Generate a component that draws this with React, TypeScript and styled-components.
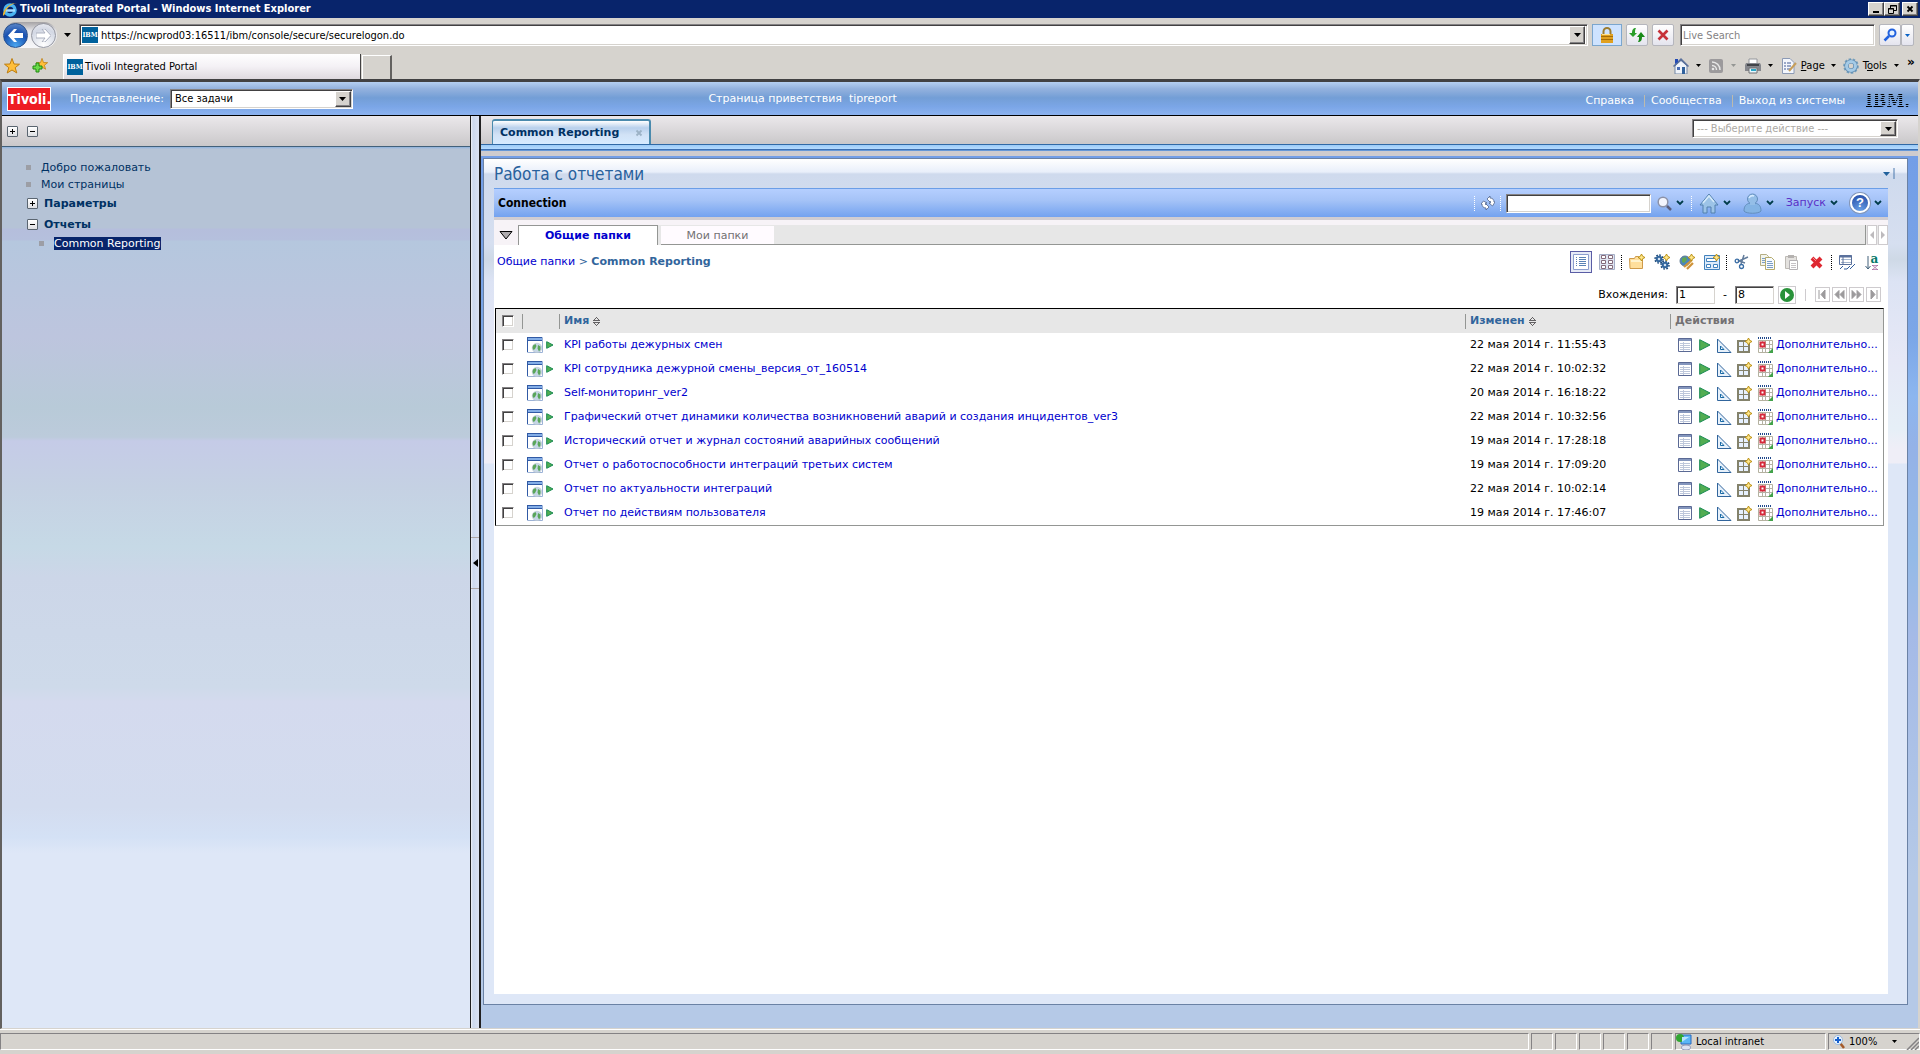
import React from "react";
import styled, { createGlobalStyle, css } from "styled-components";

const verdana = `Verdana, "DejaVu Sans", sans-serif`;
const tahoma = `Tahoma, "DejaVu Sans Condensed", "DejaVu Sans", sans-serif`;
const face = "#d6d3ce";

const GlobalStyle = createGlobalStyle`
  *, *::before, *::after { box-sizing: border-box; }
  body { margin: 0; background: ${face}; font: 11px/14px ${verdana}; color: #000; }
  button, input, select { font: inherit; margin: 0; padding: 0; color: inherit; border-radius: 0; }
  button { border: 0; background: none; cursor: pointer; display: flex; align-items: center; justify-content: center; }
  a { text-decoration: none; color: inherit; }
  svg { display: block; flex: none; }
  ul { list-style: none; margin: 0; padding: 0; }
  h1, h2 { margin: 0; }
`;

const sunken = css`
  border: 1px solid;
  border-color: #848284 #fff #fff #848284;
  box-shadow: inset 1px 1px 0 #424142, inset -1px -1px 0 ${face};
`;
const raised = css`
  background: ${face};
  border: 1px solid;
  border-color: #fff #424142 #424142 #fff;
  box-shadow: inset -1px -1px 0 #848284;
`;

const Window = styled.div`
  display: flex;
  flex-direction: column;
  min-height: 100vh;
`;

/* ---------- Browser chrome ---------- */

const TitleBar = styled.header`
  display: flex;
  align-items: center;
  height: 18px;
  padding: 0 2px;
  gap: 2px;
  background: #08246b;
  color: #fff;
  font: bold 11px/18px ${tahoma};
`;
const TitleText = styled.span`
  flex: 1;
`;
const CaptionButtons = styled.div`
  display: flex;
  & > :last-child { margin-left: 2px; }
`;
const CaptionButton = styled.button`
  ${raised}
  width: 16px;
  height: 14px;
`;

const AddressRow = styled.div`
  display: flex;
  align-items: center;
  height: 34px;
  padding: 0 6px 0 3px;
  gap: 4px;
  font-family: ${tahoma};
`;
const NavPill = styled.div`
  display: flex;
  align-items: center;
  gap: 3px;
  height: 26px;
  padding-right: 1px;
  border-radius: 13px;
  background: linear-gradient(#a5a3a5, #e7e7ea 35%, #f7f7f9);
`;
const NavButton = styled.button<{ $active?: boolean }>`
  width: 25px;
  height: 25px;
  && { border-radius: 50%; }
  border: 1px solid ${(p) => (p.$active ? "#28508c" : "#9496a0")};
  background: ${(p) =>
    p.$active
      ? "radial-gradient(circle at 50% 95%, #4aa6f0, #1850b0 55%, #5a86c8 90%)"
      : "radial-gradient(circle at 50% 90%, #fff, #d3d8e4 65%, #f0f0f4)"};
`;
const MenuArrow = styled.button<{ $w?: number }>`
  width: ${(p) => p.$w ?? 20}px;
  height: 20px;
`;
const AddressField = styled.div`
  ${sunken}
  display: flex;
  align-items: center;
  flex: 1;
  height: 22px;
  margin-left: 1px;
  padding: 2px;
  gap: 3px;
  background: #fff;
`;
const BareInput = styled.input`
  flex: 1;
  min-width: 0;
  padding-top: 1px;
  border: 0;
  outline: 0;
  background: none;
  &::placeholder { color: #848284; opacity: 1; }
`;
const DropButton = styled.button`
  ${raised}
  width: 16px;
  height: 18px;
`;
const IbmBadge = styled.span`
  width: 16px;
  height: 16px;
  background: #00619c;
  color: #fff;
  font: bold 7px/16px "DejaVu Serif Condensed", "DejaVu Serif", serif;
  text-align: center;
`;
const LockButton = styled.button`
  width: 30px;
  height: 22px;
  border: 1px solid #7ba6ce;
  background: #cee3ff;
`;
const ToolButton = styled.button<{ $w?: number }>`
  width: ${(p) => p.$w ?? 22}px;
  height: 22px;
  && { border-radius: 2px; }
  border: 1px solid #b5b6bd;
  background: linear-gradient(#fff, #e4e4ee);
`;
const SearchField = styled.div`
  ${sunken}
  display: flex;
  width: 195px;
  height: 22px;
  padding: 2px;
  margin: 0 0 0 2px;
  background: #fff;
`;
const SearchButtons = styled.div`
  display: flex;
`;

const TabRow = styled.div`
  display: flex;
  align-items: flex-end;
  height: 27px;
  padding-left: 2px;
  font-family: ${tahoma};
`;
const Favorites = styled.div`
  display: flex;
  align-self: center;
  gap: 8px;
  width: 61px;
`;
const FavoriteButton = styled.button`
  width: 20px;
  height: 20px;
`;
const BrowserTab = styled.button`
  && { justify-content: flex-start; }
  gap: 2px;
  width: 298px;
  height: 25px;
  padding: 0 3px;
  border-right: 1px solid #424142;
  border-left: 1px solid #fff;
  background: linear-gradient(#fff, #f4f1f5 50%, #ded9de);
`;
const NewTab = styled.button`
  width: 30px;
  height: 24px;
  margin-left: 1px;
  border: 1px solid #fff;
  border-right: 2px solid #63615f;
  border-bottom: 0;
`;
const CommandBar = styled.nav`
  display: flex;
  align-items: center;
  align-self: center;
  margin-left: auto;
  padding-right: 3px;
`;
const Command = styled.button`
  gap: 4px;
  height: 20px;
`;
const Chevron = styled.button`
  align-self: flex-start;
  width: 12px;
  font: bold 12px/12px ${verdana};
`;

/* ---------- Portal ---------- */

const Viewport = styled.div`
  display: flex;
  flex-direction: column;
  flex: 1;
  border: solid;
  border-width: 3px 2px 1px;
  border-color: #424142 ${face} ${face} #63615f;
`;
const PortalHeader = styled.header`
  display: flex;
  align-items: center;
  height: 34px;
  padding: 0 8px 0 5px;
  border-bottom: 1px solid #000;
  background: linear-gradient(#b5cff0, #94b2de 20%, #739ed6 48%, #7ba6e7 75%, #8cb2ef);
  color: #fff;
`;
const HeaderSide = styled.div<{ $grow: number }>`
  display: flex;
  align-items: center;
  flex: ${(p) => p.$grow} 1 0;
`;
const HeaderEnd = styled(HeaderSide)`
  justify-content: flex-end;
  padding-top: 4px;
`;
const TivoliLogo = styled.span`
  width: 44px;
  height: 24px;
  border: 1px solid #fff;
  background: #ee1c23;
  font: bold 14px/22px "Liberation Sans Narrow", "DejaVu Sans Condensed", sans-serif;
  text-align: center;
`;
const ViewLabel = styled.label`
  margin: 0 6px 0 19px;
`;
const Greeting = styled.span`
  white-space: pre;
`;
const HeaderLink = styled.a`
  padding: 0 10px 0 6px;
  border-right: 1px solid #bdbaad;
  line-height: 12px;
  &:last-of-type { border: 0; }
`;
const IbmLogo = styled.span`
  margin-left: 10px;
  color: #000;
  font: bold 18px/18px "DejaVu Serif Condensed", "DejaVu Serif", serif;
  mask-image: repeating-linear-gradient(#000 0 1px, transparent 1px 2px);
`;

const SelectBox = styled.span<{ $w: number; $h: number }>`
  ${sunken}
  position: relative;
  display: flex;
  width: ${(p) => p.$w}px;
  height: ${(p) => p.$h}px;
  padding: 2px;
  background: #fff;
`;
const BareSelect = styled.select<{ $muted?: boolean }>`
  appearance: none;
  flex: 1;
  padding: 0 18px 0 2px;
  border: 0;
  outline: 0;
  background: none;
  color: ${(p) => (p.$muted ? "#adaaa5" : "#000")};
  font-family: ${tahoma};
`;
const SelectArrow = styled.span`
  ${raised}
  position: absolute;
  inset: 1px 1px 1px auto;
  width: 16px;
  display: grid;
  place-items: center;
  pointer-events: none;
`;

const Columns = styled.div`
  display: flex;
  flex: 1;
`;
const Sidebar = styled.aside`
  display: flex;
  flex-direction: column;
  width: 469px;
  border-right: 1px solid #212021;
`;
const SidebarTools = styled.div`
  display: flex;
  align-items: center;
  gap: 9px;
  height: 31px;
  padding: 0 5px;
  border-bottom: 1px solid #42617b;
  background: linear-gradient(#ebe8eb, #cac8ca);
`;
const TreeArea = styled.nav`
  flex: 1;
  padding: 12px 0 0 25px;
  background: linear-gradient(
    #8cb2de 0, #b5c3d6 2px, #b5c3d6 81px, #b5bedc 82px, #b5c0dd 93px, #b5c7de 94px, #bdc5de 190px,
    #b8cad8 260px, #bccbdb 290px, #c5cbe7 294px, #c5d1e3 340px, #c6d9e6 400px, #ccd6e8 430px,
    #cedaea 540px, #d4daee 555px, #d3dcef 660px, #d4e1f5 690px, #dee7f7 706px
  );
  color: #003163;
`;
const TreeItem = styled.li<{ $h: number; $indent?: boolean; $bold?: boolean }>`
  display: flex;
  align-items: center;
  gap: ${(p) => (p.$bold ? 6 : 10)}px;
  height: ${(p) => p.$h}px;
  padding-left: ${(p) => (p.$indent ? 13 : 0)}px;
  font-weight: ${(p) => (p.$bold ? "bold" : "normal")};
`;
const Bullet = styled.span`
  width: 5px;
  height: 5px;
  margin-left: -1px;
  background: #9c9ea5;
`;
const TreeLink = styled.a<{ $selected?: boolean }>`
  ${(p) => p.$selected && "background: #08246b; color: #fff; line-height: 13px;"}
`;
const BoxButton = styled.button`
  width: 11px;
  height: 11px;
  && { border-radius: 1px; }
  border: 1px solid #5a6570;
  background: linear-gradient(#fff, #dedfe3);
`;
const Splitter = styled.div`
  display: flex;
  align-items: center;
  width: 10px;
  border-right: 2px solid #212021;
  background: linear-gradient(90deg, #f0f2f8, #cdd9ee 25%, #dce3f3);
`;
const SplitterHandle = styled.button`
  width: 8px;
  height: 52px;
  margin-bottom: 18px;
  border: solid #ada6a5;
  border-width: 1px 0;
`;

const Main = styled.main`
  display: flex;
  flex-direction: column;
  flex: 1;
  min-width: 0;
`;
const TabStrip = styled.div`
  display: flex;
  justify-content: space-between;
  height: 29px;
  padding: 3px 20px 0 11px;
  border-bottom: 1px solid #3169a5;
  background: linear-gradient(#ebe8eb, #cac8ca);
`;
const PageTab = styled.div`
  display: flex;
  align-items: center;
  justify-content: space-between;
  width: 159px;
  padding: 0 6px 0 7px;
  border: 1px solid #4a8aad;
  border-width: 2px 2px 0 1px;
  border-radius: 3px 3px 0 0;
  background: linear-gradient(#fff, #b8d0ec 30%, #d2e2f6 60%, #d6ebff);
  color: #003163;
  font-weight: bold;
`;
const TabRail = styled.div`
  height: 11px;
  background: linear-gradient(#9ccbf7 0, #b5dbff 4px, #315d9c 4px, #4a82c6 5px, #84aee7 6px, #cecbce 6px);
`;
const Canvas = styled.div`
  display: flex;
  flex: 1;
  padding: 2px 10px 23px 2px;
  background: linear-gradient(
    #739ee7, #7ba6e7 180px, #8cb6ef 240px, #94b2e7 290px, #94bae7 400px, #a5bae7 480px,
    #adc3e7 620px, #b5c9e7 720px
  );
`;
const Portlet = styled.section`
  display: flex;
  flex-direction: column;
  flex: 1;
  min-width: 0;
  padding: 0 19px 10px 10px;
  border: 1px solid #6b82a5;
  background: linear-gradient(
    #fff, #e9effa 13px, #cfdaed 15px, #d6dff0 85px, #ced9e6 100px, #dce3f4 122px, #e6e8f6 200px,
    #e6eff7 270px, #efeef7 290px, #efeef7 304px, #dee7f7 305px
  );
`;
const PortletTitle = styled.div`
  display: flex;
  align-items: center;
  justify-content: space-between;
  height: 29px;
`;
const TitleHeading = styled.h1`
  color: #29619c;
  font: normal 17px/28px ${tahoma};
`;
const TitleMenu = styled.button`
  gap: 3px;
  margin-right: -7px;
`;
const ConnectionBar = styled.div`
  display: flex;
  align-items: center;
  justify-content: space-between;
  height: 32px;
  padding: 0 6px 0 4px;
  border-top: 1px solid #6b9ee7;
  border-bottom: 3px solid #d0cdd2;
  background: linear-gradient(#b5cfff, #a5c3f7 40%, #73a2ef);
`;
const ConnectionName = styled.h2`
  font: bold 12px/16px ${tahoma};
`;
const ConnectionTools = styled.div`
  display: flex;
  align-items: center;
`;
const MenuButton = styled.button<{ $gap?: number }>`
  gap: 4px;
  margin-right: ${(p) => p.$gap ?? 12}px;
  color: #5a30c6;
`;
const BarInput = styled.input`
  ${sunken}
  width: 145px;
  height: 19px;
  margin: 0 6px 0 0;
  padding: 0 3px;
  background: #fff;
`;
const DottedRule = styled.span<{ $dark?: boolean; $mx?: number }>`
  height: 15px;
  margin: 0 ${(p) => p.$mx ?? 5}px;
  border-left: 1px dotted ${(p) => (p.$dark ? "#000" : "#fff")};
`;
const Body = styled.div`
  flex: 1;
  border-top: 5px solid #f7f3f7;
  background: #fff;
`;
const FolderTabs = styled.div`
  display: flex;
  height: 20px;
  background: #e7e7e7;
`;
const Toggle = styled.button`
  width: 24px;
  background: #f7f3f7;
`;
const FolderTab = styled.button<{ $active?: boolean }>`
  width: ${(p) => (p.$active ? 140 : 116)}px;
  ${(p) =>
    p.$active
      ? "border: 1px solid #949694; border-bottom: 0; background: #fff; color: #0000ce; font-weight: bold;"
      : "border: 3px solid #e7e7e7; border-width: 1px 0 0 3px; background: #fffbff; color: #737173; box-shadow: inset 0 -1px 0 #949694;"}
`;
const TabFiller = styled.div`
  flex: 1;
  border: solid #949694;
  border-width: 0 1px 1px 0;
`;
const ScrollButton = styled.button`
  width: 10px;
  margin-left: 1px;
  border: 1px solid #cecbce;
  background: #fff;
`;
const BreadcrumbRow = styled.div`
  display: flex;
  align-items: center;
  justify-content: space-between;
  height: 34px;
  padding: 0 4px 0 3px;
`;
const Breadcrumb = styled.nav`
  color: #31659c;
  & a { color: #0000ce; }
`;
const Toolbar = styled.div`
  display: flex;
  align-items: center;
`;
const IconButton = styled.button<{ $pressed?: boolean }>`
  width: ${(p) => (p.$pressed ? 22 : 25)}px;
  height: 22px;
  ${(p) => p.$pressed && "border: 1px solid #5a5da5; background: #e7ebf7; margin-right: 2px;"}
`;
const PagerRow = styled.form`
  display: flex;
  align-items: center;
  justify-content: flex-end;
  height: 29px;
  padding: 2px 7px 0 0;
`;
const PagerInput = styled.input`
  width: 39px;
  height: 18px;
  margin: 0 8px;
  padding: 0 2px;
  border: 1px solid;
  border-color: #848284 ${face} ${face} #848284;
  box-shadow: inset 1px 1px 0 #424142;
`;
const GoButton = styled.button`
  width: 18px;
  height: 18px;
  margin: 0 9px 0 -4px;
  border: 1px solid #cecbce;
`;
const PagerRule = styled.span`
  width: 1px;
  height: 12px;
  margin-right: 7px;
  background: #cecbce;
`;
const PagerButton = styled.button`
  width: 15px;
  height: 15px;
  margin-left: 2px;
  border: 1px solid #cecbce;
`;

const TableWrap = styled.div`
  margin: 0 4px 0 1px;
  border: 1px solid;
  border-color: #000 #949694 #949694 #000;
`;
const Table = styled.table`
  width: 100%;
  table-layout: fixed;
  border-collapse: collapse;
`;
const HeadCell = styled.th<{ $w?: number; $plain?: boolean }>`
  ${(p) => (p.$w ? `width: ${p.$w}px;` : "")}
  height: 24px;
  padding: 0;
  background: #e7e7e7;
  color: ${(p) => (p.$plain ? "#737173" : "#31659c")};
  text-align: left;
`;
const HeadInner = styled.span<{ $rule?: boolean }>`
  display: flex;
  align-items: center;
  gap: 4px;
  height: 15px;
  padding-left: ${(p) => (p.$rule ? 4 : 6)}px;
  border-left: ${(p) => (p.$rule ? "1px solid #949694" : "0")};
`;
const Cell = styled.td<{ $pad?: number }>`
  height: 24px;
  padding: 0 0 0 ${(p) => p.$pad ?? 5}px;
  white-space: nowrap;
`;
const CheckBox = styled.input`
  ${sunken}
  appearance: none;
  display: block;
  width: 12px;
  height: 12px;
  background: #fff;
`;
const ReportLink = styled.a`
  color: #0000ce;
`;
const IconPair = styled.span`
  display: flex;
  align-items: center;
  gap: 3px;
`;
const Actions = styled.span`
  display: flex;
  align-items: center;
  gap: 3px;
`;
const ActionButton = styled.button`
  width: 17px;
  height: 18px;
`;

/* ---------- Status bar ---------- */

const StatusBar = styled.footer`
  display: flex;
  gap: 2px;
  height: 25px;
  padding: 3px 0 4px;
  border-top: 1px solid #fff;
  font-family: ${tahoma};
`;
const StatusPane = styled.div<{ $w?: number }>`
  display: flex;
  align-items: center;
  ${(p) => (p.$w ? `width: ${p.$w}px;` : "flex: 1;")}
  gap: 4px;
  border: 1px solid;
  border-color: #848284 #fff #fff #848284;
`;
const ZoomPane = styled(StatusPane)`
  padding-left: 4px;
`;
const ZoomValue = styled.span`
  flex: 1;
`;

/* ---------- Icons ---------- */

type IconProps = { w?: number; h?: number; children: React.ReactNode };
const Icon = ({ w = 16, h = w, children }: IconProps) => (
  <svg width={w} height={h} viewBox={`0 0 ${w} ${h}`} aria-hidden="true">
    {children}
  </svg>
);
const Down = ({ color = "#000", w = 5 }: { color?: string; w?: number }) => (
  <Icon w={w} h={Math.ceil(w / 2)}>
    <path d={`M0 0H${w}L${w / 2} ${Math.ceil(w / 2)}Z`} fill={color} />
  </Icon>
);
const Vee = () => (
  <Icon w={8} h={6}>
    <path d="M1 1l3 3 3-3" stroke="#003c4a" strokeWidth="1.800" fill="none" />
  </Icon>
);
const IeIcon = () => (
  <Icon>
    <circle cx="8" cy="9" r="5" fill="none" stroke="#4ab2f0" strokeWidth="3.500" />
    <path d="M4 9.500h9" stroke="#a5dbff" strokeWidth="2.500" />
    <path d="M1 15C0 9 8 1 15 2c-6 0-12 7-12 11z" fill="#f0b830" />
  </Icon>
);
const NavArrow = ({ flip }: { flip?: boolean }) => (
  <Icon w={15} h={13}>
    <path
      d="M0 6.500 6 0h3L6 4h9v5H6l3 4H6z"
      fill="#fff"
      stroke={flip ? "#a5aaba" : "none"}
      strokeWidth=".9"
      transform={flip ? "rotate(180 7.500 6.500)" : undefined}
    />
  </Icon>
);
const Lock = () => (
  <Icon>
    <path d="M4.500 8V4.500a3.500 3.500 0 0 1 7 0V8" fill="none" stroke="#9c7d31" strokeWidth="2" />
    <rect x="2" y="7" width="12" height="9" fill="#e0a020" />
    <path d="M2 9.500h12M2 12.500h12" stroke="#a56d08" />
    <path d="M3 7.500h8" stroke="#ffe08c" />
  </Icon>
);
const Refresh = () => (
  <Icon>
    <path d="M7 1C4 1 3 3 3 6H0l4 4 4-4H6c0-2 0-3 1-5z" fill="#299e29" />
    <path d="M9 15c3 0 4-2 4-5h3l-4-5-4 5h2c0 2 0 3-1 5z" fill="#188a18" />
  </Icon>
);
const Cross = ({ color = "#c63139", w = 12 }: { color?: string; w?: number }) => (
  <Icon w={w}>
    <path
      d={`M1.500 1.500L${w - 1.5} ${w - 1.5}M${w - 1.5} 1.500L1.500 ${w - 1.5}`}
      stroke={color}
      strokeWidth={w / 4.5}
    />
  </Icon>
);
const DeleteIcon = () => (
  <Icon w={13}>
    <path d="M2 2l9 9M11 2l-9 9" stroke="#de2831" strokeWidth="4" />
    <path d="M3 2l3 3" stroke="#f7868c" strokeWidth="1" />
  </Icon>
);
const Magnifier = ({ color = "#2161de" }: { color?: string }) => (
  <Icon w={14}>
    <circle cx="9" cy="5" r="3.500" fill="#e7f3ff" stroke={color} strokeWidth="2" />
    <path d="M6 8 1.500 12.500" stroke={color} strokeWidth="2.500" />
  </Icon>
);
const Star = ({ add }: { add?: boolean }) => (
  <Icon>
    <path
      d="M8 .5 10 6l5.500.2-4.300 3.500 1.600 5.300L8 12l-4.800 3 1.600-5.300L.5 6.200 6 6z"
      fill="#ffbe39"
      stroke="#bd7d10"
      transform={add ? "translate(4 0) scale(.75)" : undefined}
    />
    {add && <path d="M4 5h3v3h3v3H7v3H4v-3H1V8h3z" fill="#6bdb4a" stroke="#218a10" />}
  </Icon>
);
const HomeIcon = () => (
  <Icon>
    <path d="M2 8 8 2l6 6v8H2z" fill="#f0f4fa" stroke="#7386a5" />
    <path d="M0 8 8 0l8 8-1 1-7-6-7 6z" fill="#5a719c" />
    <path d="M2 1h3v3L2 6z" fill="#2149b5" />
    <path d="M4 9h3v3H4z" fill="#4a6db5" />
    <path d="M9 9h3v7H9z" fill="#31619c" />
  </Icon>
);
const Rss = () => (
  <Icon w={14}>
    <rect width="14" height="14" rx="2" fill="#9c9a9c" />
    <path d="M3 3a8 8 0 0 1 8 8M3 6.500A4.500 4.500 0 0 1 7.500 11" fill="none" stroke="#e7e7e7" strokeWidth="1.500" />
    <circle cx="4" cy="10" r="1.300" fill="#e7e7e7" />
  </Icon>
);
const Printer = () => (
  <Icon>
    <path d="M4 1h8v5H4z" fill="#fff" stroke="#94969c" />
    <path d="M1 5h14l1 2v6H0V7z" fill="#84868c" />
    <path d="M2 7h12" stroke="#42454a" strokeWidth="2" />
    <path d="M4 10h8v5H4z" fill="#e7f7ff" stroke="#737173" />
    <path d="M6 12h5" stroke="#29a6c6" strokeWidth="2" />
  </Icon>
);
const PageIcon = () => (
  <Icon>
    <path d="M1.500.5H9l4 4v11H1.500z" fill="#f3f6fc" stroke="#8c9ab5" />
    <path d="M3 5h2M3 8h2M3 11h2M6 5h4M6 8h4M6 11h3" stroke="#425a94" />
    <path d="M8 13 15 5" stroke="#c69e5a" strokeWidth="2" />
  </Icon>
);
const Gear = () => (
  <Icon>
    <circle cx="8" cy="8" r="6.800" fill="none" stroke="#739ebd" strokeWidth="2" strokeDasharray="2.500 1.700" />
    <circle cx="8" cy="8" r="4.500" fill="none" stroke="#5a86ad" strokeWidth="4.200" />
    <circle cx="8" cy="8" r="4.500" fill="none" stroke="#a5cbe7" strokeWidth="3" />
  </Icon>
);
const PlusMinus = ({ plus }: { plus?: boolean }) => (
  <Icon w={5}>
    <path d={plus ? "M0 2h2V0h1v2h2v1H3v2H2V3H0z" : "M0 2h5v1H0z"} fill="#000" />
  </Icon>
);
const Sync = () => (
  <Icon w={14}>
    <path d="M6 3 9 0v2c3 0 4 2 4 4h1l-2.500 4L8 7h1.500C9.500 5.500 9 5 9 5v1z" fill="#fff" stroke="#52658c" strokeWidth=".8" />
    <path d="M8 11l-3 3v-2c-3 0-4-2-4-4H0l2.500-3L6 7H4.500c0 1.500.5 2 .5 2V8z" fill="#fff" stroke="#52658c" strokeWidth=".8" />
  </Icon>
);
const Lens = () => (
  <Icon w={15}>
    <circle cx="6" cy="6" r="4.800" fill="#f3f5fd" stroke="#8c92a8" strokeWidth="1.500" />
    <path d="M10 10l4 4" stroke="#5a5d7b" strokeWidth="2.500" />
  </Icon>
);
const BlueHome = () => (
  <Icon w={20} h={21}>
    <path d="M1 12 10 1l9 11h-3v8h-4v-6H8v6H4v-8z" fill="#9cc3e7" stroke="#5280ad" />
    <path d="M4 10l6-7 5 6" stroke="#d6ebfa" strokeWidth="1.500" fill="none" />
  </Icon>
);
const User = () => (
  <Icon w={19} h={21}>
    <path d="M1 18c0-5 2-7 6-8h5c4 1 6 3 6 8-2 3-15 3-17 0z" fill="#84b4e4" stroke="#638ebd" />
    <circle cx="9.500" cy="6" r="5" fill="#94bee7" stroke="#638ebd" />
    <path d="M7 10h5v2H7z" fill="#94bee7" />
    <path d="M6 5a4 4 0 0 1 5-2" stroke="#d6ebff" strokeWidth="1.500" fill="none" />
  </Icon>
);
const HelpBadge = styled.span`
  width: 20px;
  height: 20px;
  border: 2px solid #fff;
  border-radius: 50%;
  background: radial-gradient(circle at 50% 100%, #6ba2e7, #2149a5);
  box-shadow: 0 0 0 1px #8496b5;
  color: #fff;
  font: bold 13px/16px "Liberation Sans", sans-serif;
`;
const Spark = ({ x = 0, y = 0 }: { x?: number; y?: number }) => (
  <path
    transform={`translate(${x} ${y})`}
    d="M3.500 0 4.700 2.300 7 3.500 4.700 4.700 3.500 7 2.300 4.700 0 3.500 2.300 2.300z"
    fill="#ffe78c"
    stroke="#b58a08"
    strokeWidth=".9"
  />
);
const ListView = () => (
  <Icon>
    <path d="M.5.5h15v15H.5z" fill="#fff" stroke="#8c9ece" />
    <path d="M3 3.500h1M3 5.500h1M3 7.500h1M3 9.500h1M3 11.500h1M6 3.500h7M6 5.500h7M6 7.500h7M6 9.500h7M6 11.500h7" stroke="#5a82b5" />
  </Icon>
);
const GridView = () => (
  <Icon>
    <path d="M.5.5h15v15H.5z" fill="#dfe5f2" stroke="#a5aec6" />
    {[2, 7, 12].map((y) => [2, 9].map((x) => (
      <path key={`${x}-${y}`} d={`M${x + 0.5} ${y - 0.5}h4v3h-4z`} fill="#fff" stroke="#846b7b" />
    )))}
  </Icon>
);
const Folder = () => (
  <Icon>
    <path d="M.5 4.500h5l1-2h3l1 2h3v10H1z" fill="#ffdf9c" stroke="#ce9a4a" />
    <path d="M2 7h11" stroke="#fff3ce" strokeWidth="2" />
    <Spark x={9} />
  </Icon>
);
const Cog = ({ cx, cy }: { cx: number; cy: number }) => (
  <>
    <circle cx={cx} cy={cy} r="4" fill="none" stroke="#18497b" strokeWidth="1.500" strokeDasharray="1.700 1.400" />
    <circle cx={cx} cy={cy} r="2.300" fill="#cfe0f2" stroke="#31659c" strokeWidth="2" />
  </>
);
const Gears = () => (
  <Icon>
    <Cog cx={5} cy={5} />
    <Cog cx={11} cy={11} />
    <Spark x={9} />
  </Icon>
);
const GlobeLink = () => (
  <Icon>
    <circle cx="6" cy="7" r="5" fill="#4a86bd" stroke="#637d94" />
    <path d="M3 4l4-1 1 3-3 3-2-1zM7 9h2v3z" fill="#63a652" />
    <path d="M5 13 13 6M8 15l6-6" stroke="#ce923a" strokeWidth="2.200" />
    <path d="M6.500 14 13 8" stroke="#ffe3a5" />
    <Spark x={9} />
  </Icon>
);
const Dashboard = () => (
  <Icon>
    <path d="M.5 1.500h15v14H.5z" fill="#deebf9" stroke="#4282bd" />
    <path d="M2.500 4.500h10v3h-10zM2.500 10.500h4v3h-4zM9.500 10.500h4v3h-4z" fill="#fff" stroke="#4282bd" />
    <Spark x={9} />
  </Icon>
);
const Cut = () => (
  <Icon>
    <path d="M10 1 7 10M14 3 5 7l6 2" stroke="#637d9c" strokeWidth="1.500" fill="none" />
    <circle cx="3" cy="7" r="1.800" fill="none" stroke="#396da5" strokeWidth="1.300" />
    <circle cx="7.500" cy="12.500" r="2" fill="none" stroke="#396da5" strokeWidth="1.300" />
  </Icon>
);
const Copy = () => (
  <Icon>
    <path d="M1.500.5h6l2 2v9h-8z" fill="#f3f5ee" stroke="#b5ae84" />
    <path d="M6.500 3.500h6l3 3v9h-9z" fill="#f7fbff" stroke="#b5ab6b" />
    <path d="M8 7.500h5M8 9.500h6M8 11.500h6M8 13.500h6M3 4.500h3M3 6.500h3M3 8.500h3" stroke="#7b9ec6" />
  </Icon>
);
const Paste = () => (
  <Icon>
    <path d="M1.500 2.500h11v12h-11z" fill="#e4e2df" stroke="#bdbab5" />
    <path d="M4 1h6v3H4z" fill="#b5b2b0" />
    <path d="M5.500 6.500h8v9h-8z" fill="#fff" stroke="#b5b2b5" />
    <path d="M7 9.500h5M7 11.500h5M7 13.500h5" stroke="#c6c3c6" />
  </Icon>
);
const SetProps = () => (
  <Icon>
    <path d="M.5 1.500h12v9H.5z" fill="#fff" stroke="#5a719c" />
    <path d="M1 2.500h12" stroke="#5a719c" strokeWidth="2" />
    <path d="M2 5.500h10M2 8.500h10" stroke="#a5b6ce" />
    <path d="M4 3v8" stroke="#5a719c" />
    <path d="M1 15l3-3M5 15h3l3-3M11 15l5-5" stroke="#315d9c" fill="none" />
  </Icon>
);
const SortMark = styled.span`
  display: flex;
  align-items: flex-start;
  color: #08796b;
  font: bold 12px/9px "DejaVu Serif", serif;
`;
const SortStack = styled.span`
  display: grid;
  justify-items: end;
  gap: 1px;
`;
const ReportIcon = () => (
  <Icon>
    <path d="M.5.5h15v15H.5z" fill="#fff" stroke="#9cb2d6" />
    <path d="M0 .5h15M0 3.500h15M.5 0v15" stroke="#315aa5" />
    <path d="M1 2h14" stroke="#84aee7" strokeWidth="2" />
    <circle cx="10" cy="11" r="4.800" fill="#c6d6e6" stroke="#b5bec6" strokeWidth=".5" />
    <path d="M6 8.500 8.500 7l1 2-1.500 3-1.500 1-1-2zM11 8l2.500 1.500v3l-1.500 2-1.500-3z" fill="#5aa65a" />
  </Icon>
);
const Play = ({ w = 12, h = 12 }: { w?: number; h?: number }) => (
  <Icon w={w} h={h}>
    <path d={`M.7 .7L${w - 1} ${h / 2}L.7 ${h - 0.7}Z`} fill="#52ad52" stroke="#188a52" />
  </Icon>
);
const SheetIcon = () => (
  <Icon w={14}>
    <path d="M.5.500h13v13H.5z" fill="#fff" stroke="#5a6994" />
    <path d="M1 2h12" stroke="#8496bd" strokeWidth="2" />
    <path d="M2 5.500h10M2 7.500h10M2 9.500h10M2 11.500h10M5.500 4v9" stroke="#bdc7db" />
  </Icon>
);
const SetSquare = () => (
  <Icon w={15}>
    <path d="M.5 1v13.500H14z" fill="#e7f1fb" stroke="#31659c" />
    <path d="M3.500 8v3.500H7z" fill="#fff" stroke="#1869a5" />
  </Icon>
);
const NewView = () => (
  <Icon w={15}>
    <path d="M1 3h11v11H1z" fill="#e7f1ff" stroke="#84826b" strokeWidth="2" />
    <path d="M6.500 3v11M1 8.500h11" stroke="#84826b" />
    <Spark x={8} />
  </Icon>
);
const Calendar = () => (
  <Icon>
    <path d="M1.500 3.500h14v12h-14z" fill="#fff" stroke="#b5b2a0" />
    <path d="M5.500 4v11M8.500 4v11M12.500 4v11M2 7.500h13M2 11.500h13" stroke="#b5b2a5" />
    <path d="M1 1h14" stroke="#21498c" strokeWidth="2" strokeDasharray="1 1" />
    <path d="M3.500 5.500h4v4h-4z" fill="#fff" stroke="#d6283a" strokeWidth="2" />
    <path d="M16 11v5h-5z" fill="#42a24a" />
  </Icon>
);
const SortArrows = () => (
  <Icon w={7} h={9}>
    <path
      shapeRendering="crispEdges"
      fill="#636163"
      d="M3 0h1v1H3zM2 1h1v1H2zM4 1h1v1H4zM1 2h1v1H1zM5 2h1v1H5zM0 3h7v1H0zM0 5h7v1H0zM1 6h1v1H1zM5 6h1v1H5zM2 7h1v1H2zM4 7h1v1H4zM3 8h1v1H3z"
    />
  </Icon>
);
const Intranet = () => (
  <Icon>
    <path d="M5 1h10v9H5z" fill="#5ab6f7" stroke="#2969bd" />
    <circle cx="4" cy="4" r="4" fill="#31a631" />
    <path d="M6 3h7l-7 5z" fill="#b5e3ff" />
    <ellipse cx="10" cy="13.500" rx="4.500" ry="2.500" fill="#dee3f3" stroke="#8c92b5" />
  </Icon>
);
const ZoomIcon = () => (
  <Icon w={12} h={14}>
    <path d="M7 8l4 5" stroke="#a55a29" strokeWidth="2.500" />
    <circle cx="5" cy="5" r="4.500" fill="#e7f3ff" stroke="#9cbade" />
    <path d="M5 2v6M2 5h6" stroke="#1861ce" strokeWidth="2" />
  </Icon>
);

const pagerShapes = [
  { label: "Первая", d: "M3 2v9M9 2 5 6.500 9 11z" },
  { label: "Предыдущая", d: "M6 2.500 2 6.500l4 4zM11 2.500 7 6.500l4 4z" },
  { label: "Следующая", d: "M2 2.500l4 4-4 4zM7 2.500l4 4-4 4z" },
  { label: "Последняя", d: "M4 2l4 4.500L4 11zM10 2v9" },
];

const reports = [
  ["KPI работы дежурных смен", "22 мая 2014 г. 11:55:43"],
  ["KPI сотрудника дежурной смены_версия_от_160514", "22 мая 2014 г. 10:02:32"],
  ["Self-мониторинг_ver2", "20 мая 2014 г. 16:18:22"],
  ["Графический отчет динамики количества возникновений аварий и создания инцидентов_ver3", "22 мая 2014 г. 10:32:56"],
  ["Исторический отчет и журнал состояний аварийных сообщений", "19 мая 2014 г. 17:28:18"],
  ["Отчет о работоспособности интеграций третьих систем", "19 мая 2014 г. 17:09:20"],
  ["Отчет по актуальности интеграций", "22 мая 2014 г. 10:02:14"],
  ["Отчет по действиям пользователя", "19 мая 2014 г. 17:46:07"],
];

const rowActions = [
  { label: "Свойства", icon: <SheetIcon /> },
  { label: "Запустить", icon: <Play /> },
  { label: "Открыть в редакторе", icon: <SetSquare /> },
  { label: "Создать представление", icon: <NewView /> },
  { label: "Расписание", icon: <Calendar /> },
];

function BrowserChrome() {
  return (
    <>
      <TitleBar>
        <IeIcon />
        <TitleText>Tivoli Integrated Portal - Windows Internet Explorer</TitleText>
        <CaptionButtons>
          <CaptionButton aria-label="Minimize">
            <Icon w={8}><path d="M1 6h6v2H1z" /></Icon>
          </CaptionButton>
          <CaptionButton aria-label="Restore">
            <Icon w={9}><path d="M2.500 3V.5h6v5H6M2 1h7M.5 3.500h5v5h-5zM0 4h6" fill="none" stroke="#000" /></Icon>
          </CaptionButton>
          <CaptionButton aria-label="Close"><Cross color="#000" w={8} /></CaptionButton>
        </CaptionButtons>
      </TitleBar>
      <AddressRow>
        <NavPill>
          <NavButton $active aria-label="Back"><NavArrow /></NavButton>
          <NavButton aria-label="Forward"><NavArrow flip /></NavButton>
        </NavPill>
        <MenuArrow $w={13} aria-label="Recent pages"><Down w={7} /></MenuArrow>
        <AddressField>
          <IbmBadge>IBM</IbmBadge>
          <BareInput aria-label="Address" defaultValue="https://ncwprod03:16511/ibm/console/secure/securelogon.do" />
          <DropButton aria-label="Show addresses"><Down w={7} /></DropButton>
        </AddressField>
        <LockButton aria-label="Security report"><Lock /></LockButton>
        <ToolButton aria-label="Refresh"><Refresh /></ToolButton>
        <ToolButton aria-label="Stop"><Cross /></ToolButton>
        <SearchField>
          <BareInput aria-label="Search" placeholder="Live Search" />
        </SearchField>
        <SearchButtons>
          <ToolButton aria-label="Search"><Magnifier /></ToolButton>
          <ToolButton $w={13} aria-label="Search options"><Down color="#0861c6" /></ToolButton>
        </SearchButtons>
      </AddressRow>
      <TabRow>
        <Favorites>
          <FavoriteButton aria-label="Favorites"><Star /></FavoriteButton>
          <FavoriteButton aria-label="Add to favorites"><Star add /></FavoriteButton>
        </Favorites>
        <BrowserTab><IbmBadge>IBM</IbmBadge>Tivoli Integrated Portal</BrowserTab>
        <NewTab aria-label="New tab" />
        <CommandBar>
          <Command aria-label="Home"><HomeIcon /></Command>
          <MenuArrow aria-label="Home menu"><Down /></MenuArrow>
          <Command aria-label="Feeds"><Rss /></Command>
          <MenuArrow $w={22} aria-label="Feeds menu"><Down color="#949694" /></MenuArrow>
          <Command aria-label="Print"><Printer /></Command>
          <MenuArrow aria-label="Print menu"><Down /></MenuArrow>
          <Command><PageIcon /><span><u>P</u>age</span></Command>
          <MenuArrow $w={18} aria-label="Page menu"><Down /></MenuArrow>
          <Command><Gear /><span>T<u>o</u>ols</span></Command>
          <MenuArrow $w={18} aria-label="Tools menu"><Down /></MenuArrow>
          <Chevron aria-label="More">»</Chevron>
        </CommandBar>
      </TabRow>
    </>
  );
}

function NavigationTree() {
  return (
    <Sidebar>
      <SidebarTools>
        <BoxButton aria-label="Развернуть все"><PlusMinus plus /></BoxButton>
        <BoxButton aria-label="Свернуть все"><PlusMinus /></BoxButton>
      </SidebarTools>
      <TreeArea>
        <ul>
          <TreeItem $h={17}><Bullet /><TreeLink href="#welcome">Добро пожаловать</TreeLink></TreeItem>
          <TreeItem $h={17}><Bullet /><TreeLink href="#pages">Мои страницы</TreeLink></TreeItem>
          <TreeItem $h={21} $bold><BoxButton aria-label="Развернуть"><PlusMinus plus /></BoxButton>Параметры</TreeItem>
          <TreeItem $h={21} $bold><BoxButton aria-label="Свернуть"><PlusMinus /></BoxButton>Отчеты</TreeItem>
          <TreeItem $h={17} $indent><Bullet /><TreeLink href="#reporting" $selected>Common Reporting</TreeLink></TreeItem>
        </ul>
      </TreeArea>
    </Sidebar>
  );
}

function ReportsTable() {
  return (
    <TableWrap>
      <Table>
        <thead>
          <tr>
            <HeadCell $w={26}><HeadInner><CheckBox type="checkbox" aria-label="Выбрать все" /></HeadInner></HeadCell>
            <HeadCell $w={37} aria-label="Тип"><HeadInner $rule /></HeadCell>
            <HeadCell><HeadInner $rule>Имя <SortArrows /></HeadInner></HeadCell>
            <HeadCell $w={205}><HeadInner $rule>Изменен <SortArrows /></HeadInner></HeadCell>
            <HeadCell $w={213} $plain><HeadInner $rule>Действия</HeadInner></HeadCell>
          </tr>
        </thead>
        <tbody>
          {reports.map(([name, date]) => (
            <tr key={name}>
              <Cell $pad={6}><CheckBox type="checkbox" aria-label={name} /></Cell>
              <Cell><IconPair><ReportIcon /><Play w={8} h={8} /></IconPair></Cell>
              <Cell><ReportLink href="#report">{name}</ReportLink></Cell>
              <Cell>{date}</Cell>
              <Cell $pad={6}>
                <Actions>
                  {rowActions.map((a) => (
                    <ActionButton key={a.label} aria-label={a.label}>{a.icon}</ActionButton>
                  ))}
                  <ReportLink href="#more">Дополнительно...</ReportLink>
                </Actions>
              </Cell>
            </tr>
          ))}
        </tbody>
      </Table>
    </TableWrap>
  );
}

function ReportsPortlet() {
  return (
    <Portlet>
      <PortletTitle>
        <TitleHeading>Работа с отчетами</TitleHeading>
        <TitleMenu aria-label="Меню портлета">
          <Down color="#21619c" w={7} />
          <Icon w={2} h={11}><path d="M1 0v11" stroke="#4a79ad" /></Icon>
        </TitleMenu>
      </PortletTitle>
      <ConnectionBar>
        <ConnectionName>Connection</ConnectionName>
        <ConnectionTools>
          <DottedRule $mx={6} />
          <MenuButton $gap={0} aria-label="Обновить"><Sync /></MenuButton>
          <DottedRule />
          <BarInput aria-label="Поиск" />
          <MenuButton $gap={0} aria-label="Параметры поиска"><Lens /><Vee /></MenuButton>
          <DottedRule $mx={7} />
          <MenuButton aria-label="Домой"><BlueHome /><Vee /></MenuButton>
          <MenuButton aria-label="Пользователь"><User /><Vee /></MenuButton>
          <MenuButton>Запуск<Vee /></MenuButton>
          <MenuButton $gap={0} aria-label="Справка"><HelpBadge>?</HelpBadge><Vee /></MenuButton>
        </ConnectionTools>
      </ConnectionBar>
      <Body>
        <FolderTabs>
          <Toggle aria-label="Свернуть">
            <Icon w={14} h={9}><path d="M1 .5h12L7 8z" fill="#adaaad" stroke="#000" /></Icon>
          </Toggle>
          <FolderTab $active>Общие папки</FolderTab>
          <FolderTab>Мои папки</FolderTab>
          <TabFiller />
          <ScrollButton aria-label="Влево"><Icon w={4} h={8}><path d="M4 0v8L0 4z" fill="#bdbabd" /></Icon></ScrollButton>
          <ScrollButton aria-label="Вправо"><Icon w={4} h={8}><path d="M0 0v8l4-4z" fill="#bdbabd" /></Icon></ScrollButton>
        </FolderTabs>
        <BreadcrumbRow>
          <Breadcrumb>
            <a href="#public">Общие папки</a> &gt; <strong>Common Reporting</strong>
          </Breadcrumb>
          <Toolbar>
            <IconButton $pressed aria-label="Список"><ListView /></IconButton>
            <IconButton aria-label="Сведения"><GridView /></IconButton>
            <DottedRule $dark $mx={2} />
            <IconButton aria-label="Новая папка"><Folder /></IconButton>
            <IconButton aria-label="Новое задание"><Gears /></IconButton>
            <IconButton aria-label="Новый URL"><GlobeLink /></IconButton>
            <IconButton aria-label="Новая страница"><Dashboard /></IconButton>
            <DottedRule $dark $mx={2} />
            <IconButton aria-label="Вырезать"><Cut /></IconButton>
            <IconButton aria-label="Копировать"><Copy /></IconButton>
            <IconButton aria-label="Вставить"><Paste /></IconButton>
            <IconButton aria-label="Удалить"><DeleteIcon /></IconButton>
            <DottedRule $dark $mx={2} />
            <IconButton aria-label="Задать свойства"><SetProps /></IconButton>
            <IconButton aria-label="Порядок">
              <SortMark>
                <Icon w={6} h={15}><path d="M3 1v13M.5 11 3 14l2.500-3" stroke="#42617b" fill="none" /></Icon>
                <SortStack>
                  a
                  <Icon w={6} h={5}><path d="M0 .5h6M0 4.500h6M0 0l6 5M6 0 0 5" stroke="#a5619c" strokeWidth=".7" /></Icon>
                </SortStack>
              </SortMark>
            </IconButton>
          </Toolbar>
        </BreadcrumbRow>
        <PagerRow onSubmit={(e) => e.preventDefault()}>
          <label htmlFor="from">Вхождения:</label>
          <PagerInput id="from" defaultValue="1" />
          -
          <PagerInput aria-label="По" defaultValue="8" />
          <GoButton aria-label="Перейти">
            <Icon w={14}>
              <circle cx="7" cy="7" r="7" fill="#29923a" />
              <path d="M5 3v8l5-4z" fill="#fff" />
            </Icon>
          </GoButton>
          <PagerRule />
          {pagerShapes.map((s) => (
            <PagerButton key={s.label} type="button" aria-label={s.label}>
              <Icon w={13}><path d={s.d} fill="#9c9a9c" stroke="#9c9a9c" /></Icon>
            </PagerButton>
          ))}
        </PagerRow>
        <ReportsTable />
      </Body>
    </Portlet>
  );
}

export default function App() {
  return (
    <Window>
      <GlobalStyle />
      <BrowserChrome />
      <Viewport>
        <PortalHeader>
          <HeaderSide $grow={702}>
            <TivoliLogo>Tivoli.</TivoliLogo>
            <ViewLabel htmlFor="view">Представление:</ViewLabel>
            <SelectBox $w={183} $h={20}>
              <BareSelect id="view"><option>Все задачи</option></BareSelect>
              <SelectArrow><Down w={7} /></SelectArrow>
            </SelectBox>
          </HeaderSide>
          <Greeting>{"Страница приветствия  tipreport"}</Greeting>
          <HeaderEnd $grow={1014}>
            <HeaderLink href="#help">Справка</HeaderLink>
            <HeaderLink href="#community">Сообщества</HeaderLink>
            <HeaderLink href="#logout">Выход из системы</HeaderLink>
            <IbmLogo>IBM.</IbmLogo>
          </HeaderEnd>
        </PortalHeader>
        <Columns>
          <NavigationTree />
          <Splitter>
            <SplitterHandle aria-label="Скрыть навигацию">
              <Icon w={5} h={8}><path d="M5 0v8L0 4z" /></Icon>
            </SplitterHandle>
          </Splitter>
          <Main>
            <TabStrip>
              <PageTab>
                Common Reporting
                <button aria-label="Закрыть"><Cross color="#9cb2c6" w={8} /></button>
              </PageTab>
              <SelectBox $w={206} $h={19}>
                <BareSelect $muted aria-label="Действие"><option>--- Выберите действие ---</option></BareSelect>
                <SelectArrow><Down w={7} /></SelectArrow>
              </SelectBox>
            </TabStrip>
            <TabRail />
            <Canvas>
              <ReportsPortlet />
            </Canvas>
          </Main>
        </Columns>
      </Viewport>
      <StatusBar>
        <StatusPane />
        {[0, 1, 2, 3, 4, 5].map((n) => <StatusPane key={n} $w={22} />)}
        <StatusPane $w={151}><Intranet />Local intranet</StatusPane>
        <ZoomPane $w={92}>
          <ZoomIcon />
          <ZoomValue>100%</ZoomValue>
          <MenuArrow $w={15} aria-label="Zoom level"><Down /></MenuArrow>
          <Icon w={13} h={16}>
            <path d="M1 16 13 4M5 16l8-8M9 16l4-4" stroke="#848284" strokeWidth="1.500" />
          </Icon>
        </ZoomPane>
      </StatusBar>
    </Window>
  );
}
